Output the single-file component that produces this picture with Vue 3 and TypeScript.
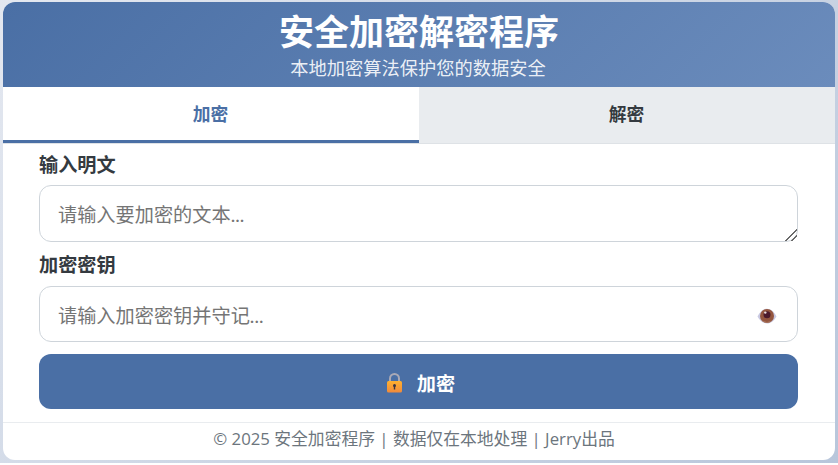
<script setup lang="ts">
import { ref } from 'vue'

const tabs = ['加密', '解密']
const activeTab = ref(0)
const plainText = ref('')
const secretKey = ref('')
</script>

<template>
  <div class="page">
    <div class="card">
      <header class="header">
        <h1 class="title">安全加密解密程序</h1>
        <p class="subtitle">本地加密算法保护您的数据安全</p>
      </header>
      <nav class="tabs">
        <button
          v-for="(tab, index) in tabs"
          :key="tab"
          type="button"
          class="tab"
          :class="{ active: activeTab === index }"
          @click="activeTab = index"
        >{{ tab }}</button>
      </nav>
      <main class="form">
        <label class="label" for="plain">输入明文</label>
        <textarea id="plain" v-model="plainText" class="field area" placeholder="请输入要加密的文本..."></textarea>
        <label class="label second" for="key">加密密钥</label>
        <div class="key-wrap">
          <input id="key" v-model="secretKey" class="field key" type="password" placeholder="请输入加密密钥并守记..." />
          <svg class="eye" width="20" height="16" viewBox="0 0 20 16" aria-hidden="true">
            <path d="M0.500 8.500C3 3.500 6.500 0.800 10 0.800s7 2.700 9.500 7.700C17 13 13.500 15.500 10 15.500S3 13 0.500 8.500z" fill="#c9c9e2" />
            <circle cx="10" cy="8" r="7" fill="#94563f" />
            <path d="M4.500 11.800A7 7 0 0 0 15.500 11.800 8 8 0 0 1 4.500 11.800z" fill="#bb8d70" />
            <circle cx="10" cy="6.800" r="3.500" fill="#4c1a2c" />
            <circle cx="8.300" cy="4.600" r="1.200" fill="#eadfe2" />
          </svg>
        </div>
        <button type="button" class="submit">
          <svg class="lock" width="17" height="20" viewBox="0 0 17 20" aria-hidden="true">
            <defs>
              <linearGradient id="lockBody" x1="0" y1="0" x2="0" y2="1">
                <stop offset="0" stop-color="#ffb02e" />
                <stop offset="1" stop-color="#f08a3c" />
              </linearGradient>
            </defs>
            <path d="M4 9V5.500a4.500 4.500 0 0 1 9 0V9" fill="none" stroke="#a9a9b6" stroke-width="2" />
            <rect x="1" y="8" width="15" height="11.500" rx="1.500" fill="url(#lockBody)" />
            <circle cx="8.500" cy="12.500" r="1.500" fill="#3b3340" />
            <rect x="7.800" y="13" width="1.400" height="3.500" fill="#3b3340" />
          </svg>
          <span>加密</span>
        </button>
      </main>
      <footer class="footer">© 2025 安全加密程序 | 数据仅在本地处理 | Jerry出品</footer>
    </div>
  </div>
</template>

<style>
html,
body {
  margin: 0;
  height: 100%;
  overflow: hidden;
  background: #fff;
}
</style>

<style scoped>
.page {
  box-sizing: border-box;
  width: 838px;
  height: 463px;
  padding: 2px 3px 3px;
  background: linear-gradient(135deg, #e4e8f0 0%, #b8c6db 100%);
  font-family: "Open Sans", "Noto Sans CJK SC", sans-serif;
}
.card {
  height: 458px;
  display: flex;
  flex-direction: column;
  overflow: hidden;
  border-radius: 12px;
  background: #fff;
}
.header {
  height: 85px;
  box-sizing: border-box;
  flex: none;
  padding-top: 9px;
  text-align: center;
  color: #fff;
  background: linear-gradient(135deg, #4a6fa5 0%, #6b8cbc 100%);
}
.title {
  margin: 0;
  font-size: 35px;
  line-height: 42px;
  font-weight: 700;
}
.subtitle {
  margin: 3px 0 0;
  padding-right: 2px;
  font-size: 18.240px;
  line-height: 24px;
  color: rgba(255, 255, 255, 0.9);
}
.tabs {
  display: flex;
  flex: none;
  height: 57px;
  background: #e9ecef;
  border-bottom: 1px solid #dee2e6;
  box-sizing: border-box;
}
.tab {
  flex: 1;
  height: 56px;
  margin-bottom: -1px;
  padding: 0 1px 2px 0;
  border: 0;
  border-bottom: 3px solid transparent;
  background: transparent;
  color: #343a40;
  font: 700 17.800px "Open Sans", "Noto Sans CJK SC", sans-serif;
}
.tab.active {
  background: #fff;
  color: #4a6fa5;
  border-bottom-color: #4a6fa5;
}
.form {
  flex: 1;
  display: flex;
  flex-direction: column;
  padding: 8px 37px 0 36px;
}
.label {
  font-size: 19.200px;
  line-height: 26px;
  font-weight: 700;
  color: #343a40;
}
.second {
  margin-top: 10px;
}
.field {
  display: block;
  box-sizing: border-box;
  width: 100%;
  margin-top: 8px;
  padding: 0 18px;
  border: 1px solid #ced4da;
  border-radius: 12px;
  outline: none;
  background: #fff;
  color: #343a40;
  font: 400 19.200px Lato, "Noto Sans CJK SC", sans-serif;
}
.field::placeholder {
  color: #757575;
  opacity: 1;
}
.area {
  height: 57px;
  margin-top: 7px;
  padding-top: 15px;
  line-height: 28px;
  resize: vertical;
}
.area::-webkit-resizer {
  background: linear-gradient(
    135deg,
    transparent 58%,
    #6a6a6a 58%,
    #6a6a6a 66%,
    transparent 66%,
    transparent 78%,
    #6a6a6a 78%,
    #6a6a6a 86%,
    transparent 86%
  );
}
.key-wrap {
  position: relative;
}
.key {
  height: 56px;
  padding-top: 2px;
}
.eye {
  position: absolute;
  right: 21px;
  top: 30px;
}
.submit {
  display: flex;
  align-items: center;
  justify-content: center;
  gap: 14px;
  height: 55px;
  margin-top: 12px;
  padding: 2px 0 0 4px;
  border: 0;
  border-radius: 12px;
  background: #4a6fa5;
  color: #fff;
  font: 700 19.200px "Open Sans", "Noto Sans CJK SC", sans-serif;
}
.footer {
  flex: none;
  height: 38px;
  box-sizing: border-box;
  padding-right: 10px;
  border-top: 1px solid #e9ecef;
  text-align: center;
  font-size: 16.800px;
  line-height: 32px;
  color: #6c757d;
}
</style>
